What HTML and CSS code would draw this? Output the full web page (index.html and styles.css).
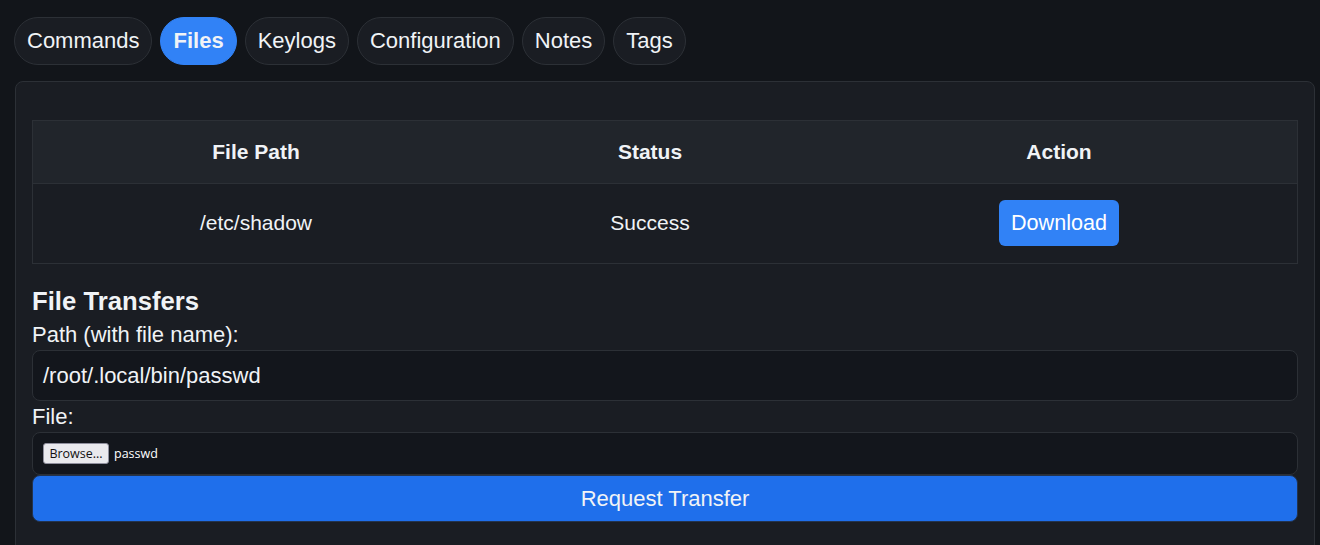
FILE: index.html
```html
<!DOCTYPE html>
<html>
<head>
<meta charset="utf-8">
<link rel="stylesheet" href="styles.css">
</head>
<body>
<div class="page">
  <nav class="tabs">
    <button class="tab">Commands</button>
    <button class="tab active">Files</button>
    <button class="tab">Keylogs</button>
    <button class="tab">Configuration</button>
    <button class="tab">Notes</button>
    <button class="tab">Tags</button>
  </nav>
  <section class="panel">
    <table class="files">
      <thead>
        <tr><th class="c1">File Path</th><th class="c2">Status</th><th class="c3">Action</th></tr>
      </thead>
      <tbody>
        <tr><td>/etc/shadow</td><td>Success</td><td><button class="dl">Download</button></td></tr>
      </tbody>
    </table>
    <h3 class="title">File Transfers</h3>
    <label class="lbl">Path (with file name):</label>
    <div class="field text">/root/.local/bin/passwd</div>
    <label class="lbl">File:</label>
    <div class="field file"><span class="browse">Browse...</span><span class="fname">passwd</span></div>
    <button class="submit">Request Transfer</button>
  </section>
</div>
</body>
</html>
```
FILE: styles.css
```css
html, body {
  margin: 0;
  background: #12151a;
  height: 100%;
  overflow: hidden;
}
body {
  font-family: "Liberation Sans", Arial, sans-serif;
  color: #f0f3f6;
}
.page {
  padding: 17px 5px 0 15px;
}
.tabs {
  display: flex;
  gap: 8px;
}
.tab {
  font-family: "Liberation Sans", Arial, sans-serif;
  font-size: 22px;
  color: #f0f3f6;
  background: #1a1d23;
  border: 1px solid #2c3036;
  border-radius: 24px;
  height: 48px;
  padding: 0 12px;
  line-height: 46px;
}
.tab:first-child {
  margin-left: -1px;
}
.tab.active {
  background: #3182f6;
  border-color: #3182f6;
  font-weight: bold;
}
.panel {
  margin-top: 16px;
  background: #1a1d23;
  border: 1px solid #2c3036;
  border-radius: 8px;
  padding: 38px 16px 40px 16px;
  display: flex;
  flex-direction: column;
}
.files {
  width: 100%;
  border-collapse: collapse;
  font-size: 21px;
  border: 1px solid #2c3036;
}
.files th {
  background: #21252b;
  height: 62px;
  font-weight: bold;
  border-bottom: 1px solid #2c3036;
  padding: 0;
}
.files td {
  height: 77px;
  text-align: center;
  padding: 0 0 2px 0;
}
.c1 { width: 446px; }
.c2 { width: 342px; }
.dl {
  font-family: "Liberation Sans", Arial, sans-serif;
  font-size: 21.6px;
  color: #fff;
  background: #3182f6;
  border: none;
  border-radius: 6px;
  height: 46px;
  padding: 0 12px;
}
.title {
  font-size: 25.7px;
  font-weight: bold;
  margin: 23px 0 6px 0;
  line-height: 29px;
}
.lbl {
  font-size: 22px;
  line-height: 25px;
  margin-bottom: 3px;
}
.field {
  background: #13161c;
  border: 1px solid #2c3036;
  border-radius: 8px;
  box-sizing: border-box;
}
.text {
  height: 51px;
  font-size: 22px;
  line-height: 49px;
  padding-left: 10px;
  margin-bottom: 3px;
}
.file {
  height: 43px;
  display: flex;
  align-items: center;
  padding-left: 10px;
  font-family: "Open Sans", "Noto Sans", sans-serif;
  font-size: 12.5px;
}
.browse {
  background: #e9e9ed;
  color: #111;
  border: 1px solid #8f8f9d;
  border-radius: 3px;
  height: 21px;
  box-sizing: border-box;
  width: 66px;
  display: flex;
  align-items: center;
  justify-content: center;
  margin-right: 5px;
}
.fname {
  color: #fff;
}
.submit {
  font-family: "Liberation Sans", Arial, sans-serif;
  font-size: 22px;
  color: #f0f3f6;
  background: #1f6feb;
  border: 1px solid #23334d;
  border-radius: 8px;
  height: 47px;
}
```
